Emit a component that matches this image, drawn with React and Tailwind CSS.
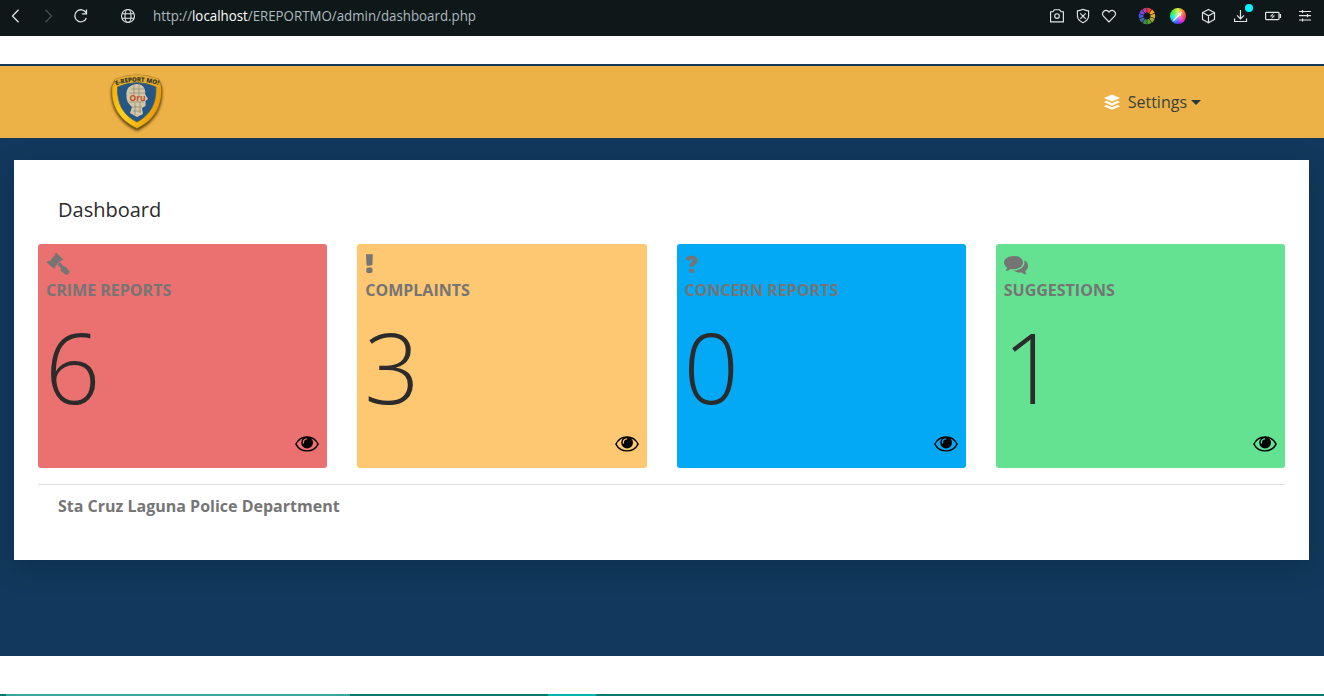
import React from "react";

function Gavel() {
  return (
    <svg width="24" height="24" viewBox="0 0 24 24" fill="currentColor">
      <path d="M10.3 0.8 L17.2 7.4 L15.9 8.5 L14.9 8.2 L9.3 14.6 L9.3 15.8 L8 16.8 L0.6 10.5 L1.9 9 L3.6 9.3 L9 3.2 L8.8 2 Z" />
      <path d="M13 11.2 L14.2 10.2 L17.2 14 C18.3 13.9 19.2 14.4 20 15.2 L23.4 19.2 C24 20.7 21.8 23.2 20 22.7 L15.6 19.8 C14.5 18.8 14.5 17.6 15 16.5 L11.8 12.8 Z" />
    </svg>
  );
}

function Exclamation() {
  return (
    <svg width="9" height="24" viewBox="0 0 9 24" fill="currentColor">
      <path d="M1 2.2 H7.8 L7.4 13 Q4.3 14.2 1.5 13.4 Z" />
      <rect x="1.3" y="15.6" width="6.2" height="5.4" rx="1.8" />
    </svg>
  );
}

function Question() {
  return (
    <svg width="14" height="24" viewBox="0 0 14 24" fill="currentColor">
      <path d="M1 6 C2.2 4.4 4.2 3.8 6.6 3.8 C10.4 3.8 12.8 5.6 12.8 8.6 C12.8 10.6 11.8 11.7 10 12.7 C9 13.2 8.9 13.7 8.9 14.7 H4.6 V13.6 C4.6 11.7 5.5 10.9 7 10 C8.2 9.3 8.5 7.6 6.5 7.6 C5.2 7.6 4.4 8.4 3.6 9.2 L0.7 7 Z" />
      <rect x="4.2" y="16.4" width="5.1" height="4.6" rx="2.1" />
    </svg>
  );
}

function Comments() {
  return (
    <svg width="25" height="24" viewBox="0 0 25 24" fill="currentColor">
      <path d="M9.6 3.9 C15 3.9 19 6.7 19 10.6 C19 14.4 15 17.2 9.6 17.2 C8.4 17.2 7.5 17.1 6.5 16.9 C5 18.2 3.2 19 1.8 18.9 C2.5 17.9 2.9 16.9 3 15.5 C1.1 14.3 0 12.6 0 10.6 C0 6.7 4.2 3.9 9.6 3.9 Z" />
      <path d="M20.1 8.2 C22.8 9.4 24.1 11.4 24.1 13.8 C24.1 15.9 23.1 17.6 21.3 18.9 C21.4 20.3 22 21.5 22.5 22.4 C20.6 22.4 19.2 21.6 17.6 20.4 C14.3 20.8 11.4 20.1 9.5 18.6 C16.1 18.4 20.5 15.3 20.5 10.6 C20.5 9.8 20.4 9 20.1 8.2 Z" />
    </svg>
  );
}

function Eye() {
  return (
    <svg width="24" height="16" viewBox="0 0 24 16">
      <path d="M0.9 8.1 C3.3 3.2 7.4 1 12 1 C16.6 1 20.7 3.2 23.1 8.1 C20.7 12.7 16.6 14.9 12 14.9 C7.4 14.9 3.3 12.7 0.9 8.1 Z" fill="none" stroke="#000" strokeWidth="1.4" />
      <circle cx="12.1" cy="6.6" r="5.9" fill="#000" />
      <path d="M8.4 7 C8.1 4.8 9.4 3 11.7 2.8" fill="none" stroke="currentColor" strokeWidth="1.3" strokeLinecap="round" />
    </svg>
  );
}

const cards = [
  { title: "CRIME REPORTS", value: 6, Icon: Gavel, bg: "bg-[#eb7070] text-[#eb7070]" },
  { title: "COMPLAINTS", value: 3, Icon: Exclamation, bg: "bg-[#fec771] text-[#fec771]" },
  { title: "CONCERN REPORTS", value: 0, Icon: Question, bg: "bg-[#03a9f4] text-[#03a9f4]" },
  { title: "SUGGESTIONS", value: 1, Icon: Comments, bg: "bg-[#64e291] text-[#64e291]" },
];

function Card({ title, value, Icon, bg }) {
  return (
    <div className={`flex h-56 flex-col rounded-[3px] px-2 pt-2 ${bg}`}>
      <div className="flex h-6 items-start text-[#757575]"><Icon /></div>
      <div className="mt-0.5 h-6 text-base leading-6 font-bold whitespace-nowrap text-[#757575]">{title}</div>
      <div className="mt-1 -ml-px h-[120px] text-[97px] leading-[120px] font-light text-[#2b2b2b]">{value}</div>
      <div className="mt-2.5 flex justify-end"><Eye /></div>
    </div>
  );
}

function Badge() {
  return (
    <svg width="56" height="62" viewBox="0 0 56 62" className="overflow-visible">
      <defs>
        <linearGradient id="gold" x1="0" y1="0" x2="1" y2="0.25">
          <stop offset="0" stopColor="#f0a90c" />
          <stop offset="0.4" stopColor="#ffd21c" />
          <stop offset="1" stopColor="#e99b08" />
        </linearGradient>
        <filter id="shade" x="-20%" y="-20%" width="140%" height="140%">
          <feDropShadow dx="0" dy="2" stdDeviation="1.8" floodColor="#4c3206" floodOpacity="0.95" />
        </filter>
      </defs>
      <path d="M6 6.5 Q28 -2.5 50 6.5 Q50.5 10 52.5 13 C54 32 46 47 28 55.5 C10 47 1 32 3 13 Q5.5 10 6 6.5 Z" fill="url(#gold)" stroke="#77602a" strokeWidth="0.7" filter="url(#shade)" />
      <path d="M8.5 14 Q28 5 47 14 C47.5 31 41 42 28 49 C14 42 8 31 8.5 14 Z" fill="#255786" stroke="#56605a" strokeWidth="0.9" />
      <path d="M6 6.5 Q28 -2.5 50 6.5 L48 13 Q28 5 8 13 Z" fill="#dfaa35" />
      <path id="badge-arc" d="M7 12.5 Q28 4.5 52 13" fill="none" />
      <text fontSize="6.2" fontWeight="800" fill="#3d3a24" fontFamily="Open Sans, sans-serif">
        <textPath href="#badge-arc" textLength="43">E-REPORT MO!</textPath>
      </text>
      <path d="M20 14 Q27 9 33 12.5 Q37 16 36 21 L39 26 L36.5 28 V33 L33 35 L34 41 L28 44 L21 40 L23 34 Q17 29 17.5 23 Q17 17 20 14 Z" fill="#d5c6a4" />
      <path d="M22 16 H35 M20 20 H36 M20 29 H35 M23 34 H33 M24 38 H32 M25 12 V22 M30 11 V23 M26 30 V42 M31 29 V40" stroke="#8b8879" strokeWidth="0.7" />
      <text x="28.5" y="28" textAnchor="middle" fontSize="8" fontWeight="700" fill="#b74a2b" textLength="16" lengthAdjust="spacingAndGlyphs" fontFamily="Open Sans, sans-serif">Oru</text>
    </svg>
  );
}

const wheel = ["#f33b36", "#f8a51b", "#e9a928", "#a8a52a", "#5da332", "#418c3f", "#3e67b8", "#4957e2", "#7948e4", "#c83b8d"];

function ColorWheel() {
  return (
    <svg width="18" height="18" viewBox="-9 -9 18 18">
      {wheel.map((color, i) => (
        <path key={color} d="M0.2 -3.6 L1.9 -3.1 L4.5 -6.9 Q2.6 -8.1 0.2 -8.2 Z" fill={color} transform={`rotate(${i * 36})`} />
      ))}
    </svg>
  );
}

function Picker() {
  return (
    <div className="flex h-4 w-4 items-center justify-center rounded-full bg-[radial-gradient(circle,#ffffff99_0%,#ffffff00_60%),conic-gradient(#d8ee35,#ff8a35_12%,#f83b4d_25%,#ef24cc_38%,#5836ff_50%,#19a5ff_62%,#00efd0_72%,#37ed32_85%,#d8ee35)]">
      <svg width="12" height="12" viewBox="0 0 12 12" fill="none" stroke="#fff" strokeWidth="1.1">
        <path d="M1.5 10.5 L7 5 M6.2 3.2 L8.8 5.8 M7.5 4.5 L9.8 2.2" />
      </svg>
    </div>
  );
}

function Toolbar() {
  return (
    <header className="flex h-9 shrink-0 items-start bg-[#0f1819] text-[#e0e5e5]">
      <svg width="152" height="32" viewBox="0 0 152 32" fill="none" stroke="currentColor" strokeWidth="1.3">
        <path d="M18.5 9.8 L12.5 16 L18.5 22.2" />
        <path d="M45.5 9.8 L51.5 16 L45.5 22.2" stroke="#444d4e" />
        <path d="M86 12.7 A6 6 0 1 0 86.4 18 M86.5 9.5 V13.8 H82" />
        <g strokeWidth="1.1">
          <circle cx="128" cy="16" r="6.5" />
          <ellipse cx="128" cy="16" rx="3" ry="6.5" />
          <path d="M122 13.7 H134 M122 18.3 H134" />
        </g>
      </svg>
      <div className="ml-px h-8 w-[340px] text-[#aeb8bf]">
        <svg width="340" height="32" viewBox="0 0 340 32" className="font-['Open_Sans',sans-serif]">
          <text x="0" y="21" fontSize="14" fill="currentColor" textLength="323" lengthAdjust="spacingAndGlyphs">http://<tspan fill="#fff">localhost</tspan>/EREPORTMO/admin/dashboard.php</text>
        </svg>
      </div>
      <svg width="76" height="32" viewBox="1046 0 76 32" className="ml-auto" fill="none" stroke="currentColor" strokeWidth="1.15">
        <path d="M1050.6 11.7 H1053 L1054.4 9.7 H1059.6 L1061 11.7 H1063.4 V21.8 H1050.6 Z" />
        <circle cx="1057" cy="16" r="2.3" />
        <path d="M1083 9.3 Q1086 10.8 1088.6 10.8 V16 Q1088.3 20.5 1083 22.7 Q1077.7 20.5 1077.4 16 V10.8 Q1080 10.8 1083 9.3 Z M1080.3 13.4 L1085.7 18.8 M1085.7 13.4 L1080.3 18.8" />
        <path d="M1109 22 L1103.4 16.2 C1100.7 12.9 1105.5 7.7 1109 12.1 C1112.5 7.7 1117.3 12.9 1114.6 16.2 Z" />
      </svg>
      <div className="ml-4 flex h-8 items-center gap-[14px]"><ColorWheel /><Picker /></div>
      <svg width="138" height="32" viewBox="1186 0 138 32" fill="none" stroke="currentColor" strokeWidth="1.2">
        <path d="M1208.5 9.5 L1214.5 12.5 V19.5 L1208.5 22.7 L1202.5 19.5 V12.5 Z M1202.5 12.5 L1208.5 15.8 L1214.5 12.5 M1208.5 15.8 V22.5" />
        <path d="M1240.5 10 V18.6 M1237 15.3 L1240.5 18.8 L1244 15.3 M1234.6 18.5 V21.5 H1246.5 V18.5" />
        <circle cx="1249" cy="8" r="4" fill="#00f5ff" stroke="none" />
        <rect x="1265.6" y="12.4" width="13.4" height="7.2" rx="0.8" />
        <path d="M1280.3 14 V18" strokeWidth="1.5" />
        <path d="M1273.4 13.6 L1270.6 16 H1274.4 L1271.6 18.4" strokeWidth="1" />
        <path d="M1299 11.5 H1311 M1299 15.7 H1311 M1299 20 H1311 M1302.5 9.9 V13.1 M1307.5 14.1 V17.3 M1302.5 18.4 V21.6" />
      </svg>
    </header>
  );
}

export default function App() {
  return (
    <div className="flex h-[696px] w-[1324px] flex-col overflow-hidden bg-white font-['Open_Sans',sans-serif] text-[#292b2c]">
      <Toolbar />
      <nav className="mt-7 flex h-[74px] shrink-0 items-start justify-between border-t-2 border-[#12395d] bg-[#edb247] pr-[123px] pl-[109px]">
        <div className="pt-[7px]"><Badge /></div>
        <div className="flex h-[72px] items-center">
          <svg width="16" height="17" viewBox="0 0 16 17" fill="#fff" className="mr-2">
            <path d="M8 0.5 L16 4 L8 7.6 L0 4 Z" />
            <path d="M0 8.1 L2.5 6.8 L8 9.2 L13.5 6.8 L16 8.1 L8 11.7 Z" />
            <path d="M0 12.2 L2.5 10.9 L8 13.3 L13.5 10.9 L16 12.2 L8 15.8 Z" />
          </svg>
          <span className="text-base text-[#37423f]">Settings</span>
          <svg width="10" height="5" viewBox="0 0 10 5" className="ml-1" fill="#27393d"><path d="M0 0 H10 L5 5 Z" /></svg>
        </div>
      </nav>
      <div className="h-[518px] shrink-0 bg-[#12395d] pt-[22px] pr-[15px] pl-[14px]">
        <main className="h-[400px] bg-white px-6 pt-[35px] shadow-[0_8px_24px_rgba(0,30,40,0.3)]">
          <h1 className="ml-5 h-[49px] text-xl leading-[30px]">Dashboard</h1>
          <div className="grid grid-cols-4 gap-[30px]">
            {cards.map((card) => <Card key={card.title} {...card} />)}
          </div>
          <div className="mt-4 border-t border-[#dedede] pt-[9px] pl-5 text-base leading-6 font-bold text-[#757575]">Sta Cruz Laguna Police Department</div>
        </main>
      </div>
      <footer className="mt-auto flex h-0.5 shrink-0 bg-[#08796f]">
        <div className="ml-1.5 w-[344px] bg-[#39a69f]" />
        <div className="ml-[198px] w-12 bg-[#00b5ad]" />
      </footer>
    </div>
  );
}
